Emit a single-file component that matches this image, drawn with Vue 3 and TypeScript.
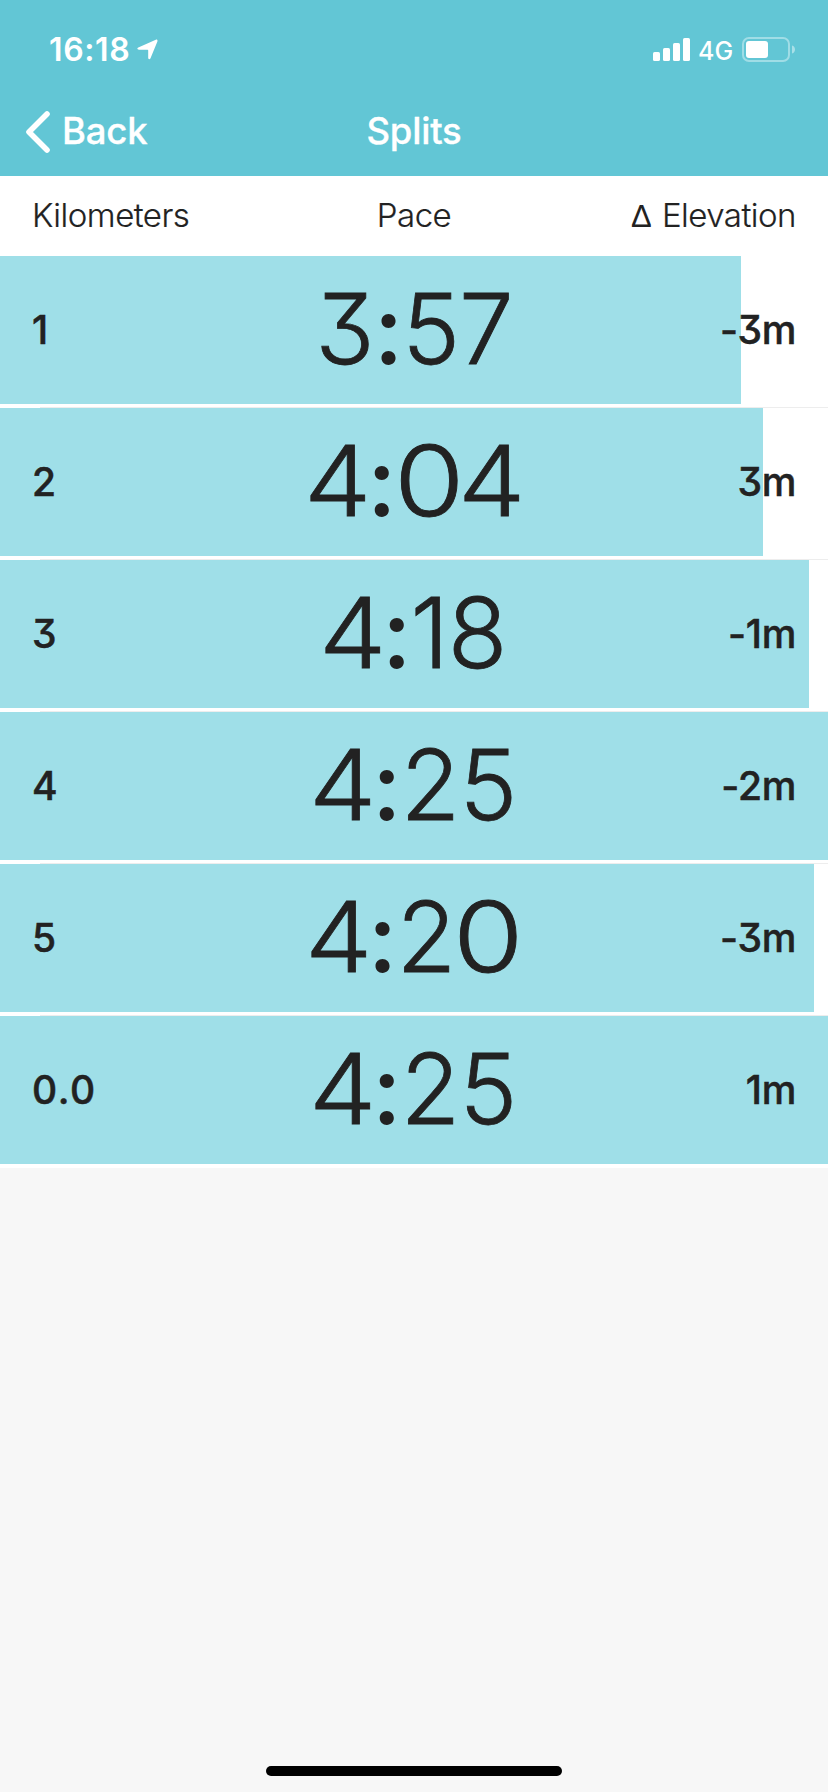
<script setup lang="ts">
interface Split {
  label: string
  pace: string
  elevation: string
  width: number
}

const splits: Split[] = [
  { label: '1', pace: '3:57', elevation: '-3m', width: 741 },
  { label: '2', pace: '4:04', elevation: '3m', width: 763 },
  { label: '3', pace: '4:18', elevation: '-1m', width: 809 },
  { label: '4', pace: '4:25', elevation: '-2m', width: 828 },
  { label: '5', pace: '4:20', elevation: '-3m', width: 814 },
  { label: '0.0', pace: '4:25', elevation: '1m', width: 828 },
]

// Fours and zeros are drawn wide, and the colon heavy
const glyphClass: Record<string, string> = { '4': 'four', '0': 'zero', ':': 'colon' }
</script>

<template>
  <div class="screen">
    <header class="top">
      <div class="status">
        <div class="clock">
          <span class="time">16:18</span>
          <svg class="location" width="22" height="22" viewBox="0 0 22 22">
            <path d="M1.300 8.400 18.800.700c1.200-.4 2 .5 1.600 1.700L13.400 19.400c-.6 1.200-2.200 1-2.200-.4V11.400c0-.4-.2-.6-.6-.6H2C.2 10.800-.2 9.100 1.300 8.400Z" fill="#fff" />
          </svg>
        </div>
        <div class="indicators">
          <svg width="38" height="24" viewBox="0 0 38 24" fill="#fff">
            <rect x="0" y="14" width="7" height="9" rx="1.6" />
            <rect x="10" y="10" width="7" height="13" rx="1.6" />
            <rect x="20" y="5" width="7" height="18" rx="1.6" />
            <rect x="30" y="0" width="7" height="23" rx="1.6" />
          </svg>
          <span class="network">4G</span>
          <svg class="battery" width="54" height="26" viewBox="0 0 54 26">
            <rect x="1" y="1" width="46" height="23" rx="6" fill="none" stroke="#fff" stroke-opacity=".4" stroke-width="2" />
            <rect x="4" y="4" width="22" height="17" rx="3" fill="#fff" />
            <path d="M50 8.500c4 1 4 7 0 8Z" fill="#fff" fill-opacity=".45" />
          </svg>
        </div>
      </div>
      <nav class="nav">
        <div class="back">
          <svg width="26" height="42" viewBox="0 0 26 42">
            <path d="M22 3 4 21l18 18" fill="none" stroke="#fff" stroke-width="5.600" stroke-linecap="round" stroke-linejoin="round" />
          </svg>
          <span class="back-label">Back</span>
        </div>
        <h1 class="title">Splits</h1>
        <div></div>
      </nav>
    </header>

    <div class="columns">
      <span class="col-km">Kilometers</span>
      <span class="col-pace">Pace</span>
      <span class="col-elev"><span class="delta">Δ</span> Elevation</span>
    </div>

    <main class="list">
      <section v-for="(s, i) in splits" :key="i" class="row">
        <div class="bar" :style="{ backgroundSize: s.width + 'px 100%' }">
          <span class="label">{{ s.label }}</span>
          <span class="pace"><span v-for="(c, j) in s.pace" :key="j" :class="glyphClass[c]">{{ c }}</span></span>
          <span class="elevation">{{ s.elevation }}</span>
        </div>
        <div v-if="i < splits.length - 1" class="divider"></div>
      </section>
    </main>

    <footer class="home"><div class="home-bar"></div></footer>
  </div>
</template>

<style>
body {
  margin: 0;
  background: #f7f7f7;
}
</style>

<style scoped>
.screen {
  display: flex;
  flex-direction: column;
  width: 828px;
  height: 1792px;
  overflow: hidden;
  background: #f7f7f7;
  color: #222;
  font-family: Inter, "Liberation Sans", sans-serif;
  font-feature-settings: "cv09" 1, "calt" 0;
}
.top {
  height: 176px;
  background: #62c6d5;
  color: #fff;
}
.status {
  display: flex;
  justify-content: space-between;
  height: 88px;
}
.clock {
  display: flex;
  padding-left: 49px;
}
.time {
  width: 88px;
  margin-top: 30px;
  line-height: 40px;
  font-size: 32px;
  font-weight: 600;
  letter-spacing: 0.6px;
}
.location {
  margin-top: 39px;
}
.indicators {
  display: flex;
  padding: 38px 32px 0 0;
}
.network {
  width: 36px;
  margin: -7px 0 0 7px;
  line-height: 40px;
  font-size: 25px;
  font-weight: 500;
}
.battery {
  margin: -1px 0 0 8px;
}
.nav {
  display: grid;
  grid-template-columns: 1fr auto 1fr;
  align-items: center;
  height: 88px;
}
.back {
  display: flex;
  align-items: center;
  padding-left: 25px;
}
.back-label,
.title {
  height: 88px;
  margin: 0;
  font-size: 36.5px;
  font-weight: 500;
  line-height: 87px;
  letter-spacing: -0.2px;
  -webkit-text-stroke: 0.3px currentColor;
}
.back-label {
  margin-left: 11px;
}
.columns {
  display: grid;
  grid-template-columns: 1fr auto 1fr;
  height: 80px;
  padding: 0 32px;
  background: #fff;
  font-size: 33px;
  font-weight: 300;
  line-height: 78px;
  letter-spacing: -0.5px;
  -webkit-text-stroke: 0.2px currentColor;
}
.col-elev {
  text-align: right;
}
.delta {
  margin-right: 2px;
  font-family: "Liberation Sans", sans-serif;
  font-size: 31px;
  font-weight: 400;
  -webkit-text-stroke: 0;
}
.row {
  display: flex;
  flex-direction: column;
  justify-content: space-between;
  height: 152px;
  background: #fff;
}
.row:last-child {
  justify-content: flex-start;
}
.bar {
  display: grid;
  grid-template-columns: 1fr auto 1fr;
  height: 148px;
  padding: 0 32px;
  line-height: 148px;
  background: linear-gradient(#9fdfe8, #9fdfe8) no-repeat;
}
.label,
.elevation {
  font-size: 39px;
  font-weight: 500;
  -webkit-text-stroke: 0.5px currentColor;
}
.label {
  letter-spacing: 1.5px;
}
.elevation {
  text-align: right;
  letter-spacing: -0.3px;
}
.pace {
  font-size: 97.5px;
  font-weight: 300;
  line-height: 147px;
  letter-spacing: -1px;
  -webkit-text-stroke: 0.8px currentColor;
}
.pace span {
  display: inline-block;
}
.pace .colon {
  font-weight: 500;
  -webkit-text-stroke: 0;
}
.pace .four {
  transform: scaleX(1.1);
}
.pace .zero {
  margin: 0 3px;
  transform: scaleX(1.17);
}
.divider {
  height: 1px;
  margin-left: 40px;
  background: #ededed;
}
.home {
  display: flex;
  justify-content: center;
  margin-top: auto;
  padding-bottom: 16px;
}
.home-bar {
  width: 296px;
  height: 10px;
  border-radius: 5px;
  background: #000;
}
</style>
